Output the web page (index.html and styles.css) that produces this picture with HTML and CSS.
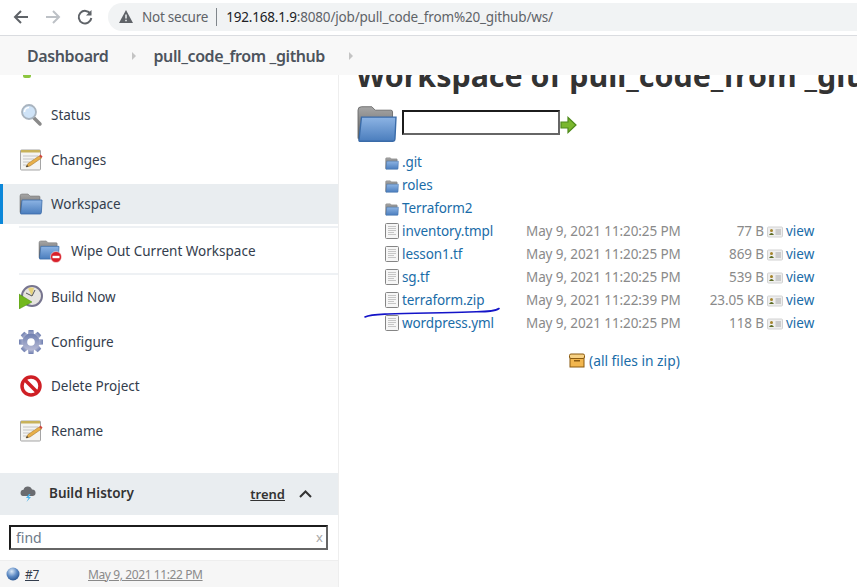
FILE: index.html
```html
<!DOCTYPE html>
<html lang="en">
<head>
    <meta charset="UTF-8">
    <title>Workspace of pull_code_from _github</title>
    <link rel="stylesheet" href="styles.css">
</head>
<body>
    <svg class="defs" width="0" height="0">
        <defs>
            <linearGradient id="blueFace" x1="0" y1="0" x2="0" y2="1">
                <stop offset="0" stop-color="#8db4e4"/>
                <stop offset="1" stop-color="#4a7dbd"/>
            </linearGradient>
            <linearGradient id="greyBack" x1="0" y1="0" x2="0" y2="1">
                <stop offset="0" stop-color="#a6a6a6"/>
                <stop offset="1" stop-color="#5c5c5c"/>
            </linearGradient>
            <linearGradient id="gearFill" x1="0" y1="0" x2="0" y2="1">
                <stop offset="0" stop-color="#6f7fb0"/>
                <stop offset="1" stop-color="#b9bcd6"/>
            </linearGradient>
            <radialGradient id="ball" cx="0.4" cy="0.3" r="0.8">
                <stop offset="0" stop-color="#dbe9f7"/>
                <stop offset="0.5" stop-color="#5d8ac4"/>
                <stop offset="1" stop-color="#1f4a86"/>
            </radialGradient>
            <symbol id="folder" viewBox="0 0 24 22">
                <path d="M1 3 Q1 1 3 1 H9 L11 3 H20 Q21 3 21 4 V8 H3 V20 H2 Q1 20 1 19 Z" fill="url(#greyBack)" stroke="#666" stroke-width=".5"/>
                <path d="M3 7 H23 L22.4 19.5 Q22.3 21 21 21 H2 Q1.4 21 1.6 20 Z" fill="url(#blueFace)" stroke="#3a6ba8" stroke-width=".8"/>
            </symbol>
            <symbol id="file" viewBox="0 0 14 16">
                <rect x=".5" y=".5" width="13" height="15" rx="1" fill="#f6f6f6" stroke="#858585"/>
                <path d="M3 3.5 H11 M3 5.5 H11 M3 7.5 H11 M3 9.5 H9 M3 11.5 H11" stroke="#c6c6c6"/>
            </symbol>
            <symbol id="notepad" viewBox="0 0 24 24">
                <rect x="1.5" y="2" width="20" height="20" rx="1" fill="#f4f4f2" stroke="#a5a5a5"/>
                <path d="M2 2 H21 V4.500 H2 Z" fill="#c8b25a"/>
                <path d="M4 8 H19 M4 11 H15 M4 14 H11 M4 17 H9" stroke="#c4c4c4"/>
                <path d="M7 19 L9 15.500 L20 8 L22.500 10 L11 18 Z" fill="#e8b04a" stroke="#9a6a20" stroke-width=".5"/>
                <path d="M20 8 L22.500 10 L23.500 8.500 L21.500 6.500 Z" fill="#d0473c"/>
                <path d="M7 19 L8 17 L9.500 18.500 Z" fill="#333"/>
            </symbol>
            <symbol id="viewcard" viewBox="0 0 16 12">
                <rect x=".5" y="1" width="15" height="10" rx="1" fill="#eee" stroke="#d2d2d2"/>
                <circle cx="4.500" cy="4.500" r="1.500" fill="#a5842c"/>
                <path d="M2 9 Q4.500 5 7 9 Z" fill="#5b6b24"/>
                <path d="M8.500 4 H14 M8.500 6 H14 M8.500 8 H14" stroke="#a8a8a8"/>
            </symbol>
        </defs>
    </svg>

    <header class="browser-bar">
        <svg class="nav-icon" width="18" height="18" viewBox="0 0 18 18"><path d="M16 9 H3 M9 3 L3 9 L9 15" fill="none" stroke="#5f6368" stroke-width="2"/></svg>
        <svg class="nav-icon" width="18" height="18" viewBox="0 0 18 18"><path d="M2 9 H15 M9 3 L15 9 L9 15" fill="none" stroke="#bdc1c6" stroke-width="2"/></svg>
        <svg class="nav-icon" width="18" height="18" viewBox="0 0 18 18"><path d="M14.500 6 A6.300 6.300 0 1 0 15.300 10" fill="none" stroke="#5f6368" stroke-width="2"/><path d="M15.500 2 V7.500 H10 Z" fill="#5f6368"/></svg>
        <div class="address">
            <svg width="14" height="13" viewBox="0 0 14 13"><path d="M7 0 L14 13 H0 Z" fill="#5f6368"/><path d="M7 4.500 V8.500 M7 9.800 V11.300" stroke="#f1f3f4" stroke-width="1.500"/></svg>
            <span class="not-secure">Not secure</span>
            <span class="address-sep"></span>
            <span class="url"><b>192.168.1.9</b>:8080/job/pull_code_from%20_github/ws/</span>
        </div>
    </header>

    <nav class="breadcrumbs">
        <a href="#">Dashboard</a>
        <span class="crumb-arrow"></span>
        <a href="#">pull_code_from _github</a>
        <span class="crumb-arrow"></span>
    </nav>

    <div class="page">
        <aside class="sidebar">
            <div class="sliver"></div>

            <a class="task" href="#">
                <svg width="24" height="24" viewBox="0 0 24 24">
                    <path d="M14 14 L21 21" stroke="#8a8a8a" stroke-width="3.500" stroke-linecap="round"/>
                    <circle cx="10" cy="9" r="7" fill="#cfe3f7" stroke="#a9b4bf" stroke-width="1.800"/>
                    <path d="M5.500 9 A4.500 4.500 0 0 1 10 4.500" fill="none" stroke="#fff" stroke-width="1.500"/>
                </svg>
                <span>Status</span>
            </a>
            <a class="task" href="#">
                <svg width="24" height="24"><use href="#notepad"/></svg>
                <span>Changes</span>
            </a>
            <a class="task active" href="#">
                <svg width="24" height="22"><use href="#folder"/></svg>
                <span>Workspace</span>
            </a>
            <div class="subtasks">
                <a class="task" href="#">
                    <svg width="24" height="24" viewBox="0 0 24 24">
                        <use href="#folder" width="22" height="20" y="1"/>
                        <circle cx="18" cy="18" r="5.500" fill="#d8202a" stroke="#fff" stroke-width=".5"/>
                        <rect x="14.500" y="16.800" width="7" height="2.400" fill="#fff"/>
                    </svg>
                    <span>Wipe Out Current Workspace</span>
                </a>
            </div>
            <a class="task" href="#">
                <svg width="24" height="24" viewBox="0 0 24 24">
                    <circle cx="13" cy="11" r="10" fill="#e6e4e0" stroke="#77758f" stroke-width="2"/>
                    <path d="M13 11 L9 3.500 A8 8 0 0 1 15 3 Z" fill="#e6d27a"/>
                    <path d="M13 11 L16 5 M13 11 L7 8" stroke="#555" stroke-width="1"/>
                    <path d="M0 9 L13 17 L0 24 Z" fill="#72b81e" stroke="#4d8a12" stroke-width=".5"/>
                </svg>
                <span>Build Now</span>
            </a>
            <a class="task" href="#">
                <svg width="24" height="24" viewBox="0 0 24 24">
                    <g fill="url(#gearFill)">
                        <path d="M12 12 m-2.500 -12 h5 l.6 5 h-6.200 Z"/>
                        <path d="M12 12 m-2.500 -12 h5 l.6 5 h-6.200 Z" transform="rotate(45 12 12)"/>
                        <path d="M12 12 m-2.500 -12 h5 l.6 5 h-6.200 Z" transform="rotate(90 12 12)"/>
                        <path d="M12 12 m-2.500 -12 h5 l.6 5 h-6.200 Z" transform="rotate(135 12 12)"/>
                        <path d="M12 12 m-2.500 -12 h5 l.6 5 h-6.200 Z" transform="rotate(180 12 12)"/>
                        <path d="M12 12 m-2.500 -12 h5 l.6 5 h-6.200 Z" transform="rotate(225 12 12)"/>
                        <path d="M12 12 m-2.500 -12 h5 l.6 5 h-6.200 Z" transform="rotate(270 12 12)"/>
                        <path d="M12 12 m-2.500 -12 h5 l.6 5 h-6.200 Z" transform="rotate(315 12 12)"/>
                        <circle cx="12" cy="12" r="8.500"/>
                    </g>
                    <circle cx="12" cy="12" r="3.800" fill="#fff"/>
                </svg>
                <span>Configure</span>
            </a>
            <a class="task" href="#">
                <svg width="24" height="24" viewBox="0 0 24 24">
                    <circle cx="12" cy="12" r="9" fill="#fff" stroke="#cf1f25" stroke-width="3.500"/>
                    <path d="M6 6 L18 18" stroke="#cf1f25" stroke-width="3.500"/>
                </svg>
                <span>Delete Project</span>
            </a>
            <a class="task" href="#">
                <svg width="24" height="24"><use href="#notepad"/></svg>
                <span>Rename</span>
            </a>

            <section class="history">
                <div class="history-head">
                    <svg width="18" height="18" viewBox="0 0 18 18">
                        <path d="M4 11 A3.200 3.200 0 0 1 4.500 4.700 A4.500 4.500 0 0 1 13 4.500 A3.300 3.300 0 0 1 14 11 Z" fill="#6a6c70"/>
                        <path d="M10 9 L7 13 H9.500 L7.500 17 L12 12 H9.800 L11.500 9 Z" fill="#4fb4ea"/>
                    </svg>
                    <h2>Build History</h2>
                    <a class="trend" href="#">trend</a>
                    <svg class="chevron" width="13" height="8" viewBox="0 0 13 8"><path d="M1 7 L6.500 1.500 L12 7" fill="none" stroke="#333" stroke-width="2"/></svg>
                </div>
                <div class="history-search">
                    <input class="find" type="text" placeholder="find">
                    <span class="clear">x</span>
                </div>
                <div class="build-row">
                    <svg width="14" height="14" viewBox="0 0 14 14"><circle cx="7" cy="7" r="6.500" fill="url(#ball)"/></svg>
                    <a class="build-num" href="#">#7</a>
                    <a class="build-date" href="#">May 9, 2021 11:22 PM</a>
                </div>
            </section>
        </aside>

        <main class="main">
            <h1>Workspace of pull_code_from _github</h1>

            <form class="path-form">
                <svg width="42" height="38"><use href="#folder"/></svg>
                <input class="path" type="text">
                <svg width="17" height="18" viewBox="0 0 17 18"><path d="M1 6 H8 V1.500 L16 9 L8 16.500 V12 H1 Z" fill="#7ab72e" stroke="#4f8a1c" stroke-width="1.200"/></svg>
            </form>

            <table class="files">
                <tr><td class="name"><svg width="14" height="13"><use href="#folder"/></svg><a href="#">.git</a></td><td></td><td></td><td></td></tr>
                <tr><td class="name"><svg width="14" height="13"><use href="#folder"/></svg><a href="#">roles</a></td><td></td><td></td><td></td></tr>
                <tr><td class="name"><svg width="14" height="13"><use href="#folder"/></svg><a href="#">Terraform2</a></td><td></td><td></td><td></td></tr>
                <tr><td class="name"><svg width="14" height="16"><use href="#file"/></svg><a href="#">inventory.tmpl</a></td><td class="date">May 9, 2021 11:20:25 PM</td><td class="size">77 B</td><td class="act"><svg width="16" height="12"><use href="#viewcard"/></svg><a href="#">view</a></td></tr>
                <tr><td class="name"><svg width="14" height="16"><use href="#file"/></svg><a href="#">lesson1.tf</a></td><td class="date">May 9, 2021 11:20:25 PM</td><td class="size">869 B</td><td class="act"><svg width="16" height="12"><use href="#viewcard"/></svg><a href="#">view</a></td></tr>
                <tr><td class="name"><svg width="14" height="16"><use href="#file"/></svg><a href="#">sg.tf</a></td><td class="date">May 9, 2021 11:20:25 PM</td><td class="size">539 B</td><td class="act"><svg width="16" height="12"><use href="#viewcard"/></svg><a href="#">view</a></td></tr>
                <tr><td class="name"><svg width="14" height="16"><use href="#file"/></svg><a href="#">terraform.zip</a></td><td class="date">May 9, 2021 11:22:39 PM</td><td class="size">23.05 KB</td><td class="act"><svg width="16" height="12"><use href="#viewcard"/></svg><a href="#">view</a></td></tr>
                <tr><td class="name"><svg width="14" height="16"><use href="#file"/></svg><a href="#">wordpress.yml</a></td><td class="date">May 9, 2021 11:20:25 PM</td><td class="size">118 B</td><td class="act"><svg width="16" height="12"><use href="#viewcard"/></svg><a href="#">view</a></td></tr>
            </table>

            <div class="all-files">
                <svg width="16" height="15" viewBox="0 0 16 15">
                    <rect x="1" y="5" width="14" height="9" fill="#f2b64e" stroke="#8a5a10"/>
                    <rect x=".5" y="1" width="15" height="4.500" rx="1.500" fill="#f7d184" stroke="#8a5a10"/>
                    <rect x="5" y="7" width="6" height="1.500" fill="#8a5a10"/>
                </svg>
                <a href="#">(all files in zip)</a>
            </div>

            <!-- marca azul a mano debajo de terraform.zip -->
            <svg class="scribble" width="140" height="12" viewBox="0 0 140 12">
                <path d="M1 10 C6 7.500 12 7.500 24 7 C50 6 80 6 105 5 C120 4.500 130 5 135 1.500" fill="none" stroke="#1414c8" stroke-width="1.600" stroke-linecap="round"/>
            </svg>
        </main>
    </div>
</body>
</html>
```

FILE: styles.css
```css
* {
    box-sizing: border-box;
}

html, body {
    height: 100%;
}

body {
    margin: 0;
    font-family: "Noto Sans", Arial, sans-serif;
    font-size: 13px;
    color: #333333;
    background-color: #ffffff;
    overflow: hidden;
}

a {
    color: inherit;
    text-decoration: none;
}

.defs {
    position: absolute;
}

/* Barra del navegador */
.browser-bar {
    height: 36px;
    display: flex;
    align-items: center;
    padding: 0 0 2px 12px;
    border-bottom: 1px solid #dadce0;
    background-color: #ffffff;
}

.nav-icon {
    margin-right: 14px;
    flex: none;
}

.address {
    flex: 1;
    height: 28px;
    padding-left: 11px;
    display: flex;
    align-items: center;
    background-color: #f1f3f4;
    border-radius: 14px 0 0 14px;
    white-space: nowrap;
    font-size: 13.500px;
    color: #5f6368;
}

.not-secure {
    margin-left: 9px;
    letter-spacing: -0.250px;
}

.address-sep {
    width: 1px;
    height: 18px;
    margin: 0 9px 0 8px;
    background-color: #80868b;
}

.url {
    letter-spacing: -0.180px;
}

.url b {
    font-weight: normal;
    color: #202124;
}

/* Migas de pan */
.breadcrumbs {
    height: 39px;
    display: flex;
    align-items: center;
    padding-left: 27px;
    background-color: #f8f8f8;
    font-size: 16px;
    font-weight: 600;
    color: #4d545d;
    letter-spacing: -0.400px;
}

.crumb-arrow {
    width: 0;
    height: 0;
    margin: 0 17px 0 24px;
    border-left: 4px solid #c4c4c4;
    border-top: 4px solid transparent;
    border-bottom: 4px solid transparent;
}

/* Panel lateral */
.page {
    display: flex;
    height: 512px;
}

.sidebar {
    width: 339px;
    flex: none;
    border-right: 1px solid #eeeeee;
    overflow: hidden;
}

.sliver {
    width: 8px;
    height: 3px;
    margin: 0 0 17px 23px;
    background-color: #8cc63f;
    border-radius: 0 0 2px 2px;
}

.task {
    height: 40px;
    margin-bottom: 4.500px;
    padding-left: 19px;
    display: flex;
    align-items: center;
    gap: 8px;
    font-size: 13.500px;
    color: #333d4d;
}

.task svg {
    flex: none;
}

.task.active {
    height: 40px;
    margin-bottom: 2px;
    padding-left: 16px;
    border-left: 3px solid #0b87d9;
    background-color: #e9edf0;
}

.subtasks {
    margin: 0 0 2px 19px;
    height: 49px;
    border-top: 2px solid #eef1f4;
    border-bottom: 2px solid #eef1f4;
}

.subtasks .task {
    height: 45px;
    margin: 0;
    gap: 9px;
}

.history {
    margin-top: 22.500px;
}

.history-head {
    height: 42px;
    padding: 0 26px 0 19px;
    display: flex;
    align-items: center;
    background-color: #e9edf0;
}

.history-head h2 {
    flex: 1;
    margin: 0 0 2px 12px;
    font-size: 13.500px;
    font-weight: 600;
    color: #333333;
}

.trend {
    font-weight: 600;
    text-decoration: underline;
    color: #333333;
    margin-right: 14px;
}

.history-search {
    position: relative;
    height: 45px;
    padding: 10px 10px 10px 9px;
}

.find {
    width: 319px;
    height: 25px;
    padding: 0 5px;
    border-width: 2px;
    border-style: solid;
    border-color: #1c1c1c #666666 #666666 #1c1c1c;
    font: 14px "Noto Sans", Arial, sans-serif;
    outline: none;
}

.find::placeholder {
    color: #6d7a8a;
    opacity: 1;
}

.clear {
    position: absolute;
    right: 15px;
    top: 13px;
    color: #a8a8a8;
    font-size: 13px;
}

.build-row {
    height: 27px;
    padding: 0 0 0 6px;
    display: flex;
    align-items: center;
    gap: 5px;
    background-color: #f6f6f6;
    border-top: 1px solid #eeeeee;
}

.build-num {
    width: 58px;
    font-size: 12px;
    letter-spacing: -0.300px;
    text-decoration: underline;
    color: #333d4d;
}

.build-date {
    font-size: 12px;
    text-decoration: underline;
    color: #8a8a8a;
    letter-spacing: -0.400px;
}

/* Contenido principal */
.main {
    position: relative;
    flex: 1;
    min-width: 0;
    padding-left: 17px;
    overflow: hidden;
}

.main h1 {
    margin: -19px 0 0 0;
    height: 49px;
    white-space: nowrap;
    font-size: 30.400px;
    line-height: 40px;
    font-weight: 700;
    color: #333333;
}

.path-form {
    display: flex;
    align-items: center;
    margin: 0;
    height: 38px;
    gap: 4px;
}

.path-form svg:last-child {
    margin: 2px 0 0 -4px;
}

.path {
    width: 158px;
    height: 25px;
    margin-top: -3px;
    border-width: 2px;
    border-style: solid;
    border-color: #1c1c1c #666666 #666666 #1c1c1c;
    outline: none;
}

.files {
    border-collapse: collapse;
    margin: 7px 0 0 29px;
    font-size: 13.500px;
}

.files td {
    height: 23px;
    padding: 0;
    white-space: nowrap;
}

.files a {
    color: #1a6ca8;
}

.name {
    width: 141px;
    letter-spacing: -0.100px;
}

.name svg {
    margin-right: 3px;
    vertical-align: -3px;
}

.date {
    width: 170px;
    color: #8a8a8a;
    letter-spacing: -0.100px;
}

.size {
    width: 68px;
    text-align: right;
    color: #8a8a8a;
    letter-spacing: -0.100px;
}

.act svg {
    margin: 0 3px;
    vertical-align: -2px;
}

.all-files {
    display: flex;
    align-items: center;
    gap: 4px;
    margin: 17px 0 0 213px;
    font-size: 13.800px;
}

.all-files a {
    color: #1a6ca8;
}

.scribble {
    position: absolute;
    left: 25px;
    top: 232px;
}
```
